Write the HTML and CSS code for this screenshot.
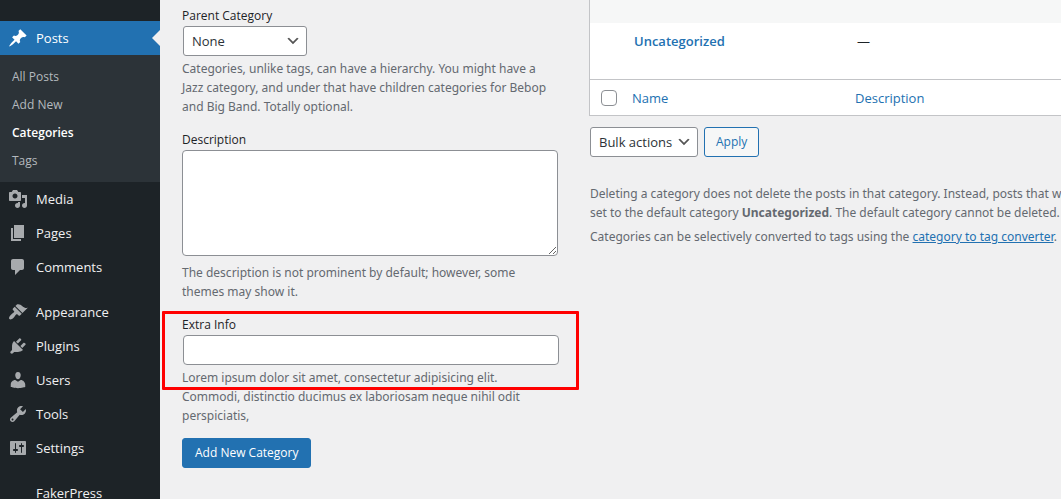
FILE: index.html
```html
<!DOCTYPE html>
<html lang="en">
<head>
<meta charset="utf-8">
<meta name="viewport" content="width=device-width, initial-scale=1">
<title>Categories</title>
<link rel="stylesheet" href="styles.css">
</head>
<body>
<div class="admin">
  <nav class="menu" aria-label="Main menu">
    <a class="menu-item current" href="#"><svg class="icon" viewBox="0 0 20 20" aria-hidden="true"><path d="M10.44 3.02l1.82-1.82 6.36 6.35-1.83 1.82c-1.05-.68-2.48-.57-3.41.36l-.75.75c-.92.93-1.04 2.35-.35 3.41l-1.83 1.82-2.41-2.41-2.8 2.79c-.42.42-3.38 2.71-3.8 2.29s1.86-3.39 2.28-3.81l2.79-2.79L4.1 9.36l1.83-1.82c1.05.69 2.48.57 3.4-.36l.75-.75c.93-.92 1.05-2.35.36-3.41z"/></svg><span>Posts</span></a>
    <div class="submenu">
      <a href="#">All Posts</a>
      <a href="#">Add New</a>
      <a class="active" href="#">Categories</a>
      <a href="#">Tags</a>
    </div>
    <a class="menu-item" href="#"><svg class="icon" viewBox="0 0 20 20" aria-hidden="true"><path d="M13 11V4c0-.55-.45-1-1-1h-1.67L9 1H5L3.67 3H2c-.55 0-1 .45-1 1v7c0 .55.45 1 1 1h10c.55 0 1-.45 1-1zM7 4.5c1.38 0 2.5 1.12 2.5 2.5S8.38 9.5 7 9.5 4.5 8.38 4.5 7 5.62 4.5 7 4.5zM14 6h5v10.5c0 1.38-1.12 2.5-2.5 2.5S14 17.88 14 16.5s1.12-2.5 2.5-2.5c.17 0 .34.02.5.05V9h-3V6zm-4 8.05V13h2v3.5c0 1.38-1.12 2.5-2.5 2.5S7 17.88 7 16.5 8.12 14 9.5 14c.17 0 .34.02.5.05z"/></svg><span>Media</span></a>
    <a class="menu-item" href="#"><svg class="icon" viewBox="0 0 20 20" aria-hidden="true"><path d="M6 15V2h10v13H6zm-1 1h8v2H3V5h2v11z"/></svg><span>Pages</span></a>
    <a class="menu-item" href="#"><svg class="icon" viewBox="0 0 20 20" aria-hidden="true"><path d="M5 2h9c1.1 0 2 .9 2 2v7c0 1.1-.9 2-2 2h-2l-5 5v-5H5c-1.1 0-2-.9-2-2V4c0-1.1.9-2 2-2z"/></svg><span>Comments</span></a>
    <a class="menu-item group-start" href="#"><svg class="icon" viewBox="0 0 20 20" aria-hidden="true"><path d="M14.48 11.06L7.41 3.99l1.5-1.5c.5-.56 2.3-.47 3.51.32 1.21.8 1.43 1.28 2.91 2.1 1.18.64 2.45 1.26 4.45.85zm-.71.71L6.7 4.7 4.93 6.47c-.39.39-.39 1.02 0 1.41l1.06 1.06c.39.39.39 1.03 0 1.42-.6.6-1.43 1.11-2.21 1.69-.35.26-.7.53-1.01.84C1.43 14.23.4 16.08 1.4 17.07c.99 1 2.84-.03 4.18-1.36.31-.31.58-.66.85-1.02.57-.78 1.08-1.61 1.69-2.21.39-.39 1.02-.39 1.41 0l1.06 1.06c.39.39 1.02.39 1.41 0z"/></svg><span>Appearance</span></a>
    <a class="menu-item" href="#"><svg class="icon" viewBox="0 0 20 20" aria-hidden="true"><path d="M13.11 4.36L9.87 7.6 8 5.73l3.24-3.24c.35-.34 1.05-.2 1.56.32.52.51.66 1.21.31 1.55zm-8 1.77l.91-1.12 9.01 9.01-1.19.84c-.71.71-2.63 1.16-3.82 1.16H6.14L4.9 17.26c-.59.59-1.54.59-2.12 0-.59-.58-.59-1.53 0-2.12l1.24-1.24v-3.88c0-1.13.4-3.19 1.09-3.89zm7.26 3.97l3.24-3.24c.34-.35 1.04-.21 1.55.31.52.51.66 1.21.31 1.55l-3.24 3.25z"/></svg><span>Plugins</span></a>
    <a class="menu-item" href="#"><svg class="icon" viewBox="0 0 20 20" aria-hidden="true"><path d="M10 9.25c-2.27 0-2.73-3.44-2.73-3.44C7 4.02 7.82 2 9.97 2c2.16 0 2.98 2.02 2.71 3.81 0 0-.41 3.44-2.68 3.44zm0 2.57L12.72 10c2.39 0 4.52 2.33 4.52 4.53v2.49s-3.65 1.13-7.24 1.13c-3.65 0-7.24-1.13-7.24-1.13v-2.49c0-2.25 1.94-4.48 4.47-4.48z"/></svg><span>Users</span></a>
    <a class="menu-item" href="#"><svg class="icon" viewBox="0 0 20 20" aria-hidden="true"><path d="M16.68 9.77c-1.34 1.34-3.3 1.67-4.95.99l-5.41 6.52c-.99.99-2.59.99-3.58 0s-.99-2.59 0-3.57l6.52-5.42c-.68-1.65-.35-3.61.99-4.95 1.28-1.28 3.12-1.62 4.72-1.06l-2.89 2.89 2.82 2.82 2.86-2.87c.53 1.58.18 3.39-1.08 4.65zM3.81 16.21c.4.39 1.04.39 1.43 0 .4-.4.4-1.04 0-1.43-.39-.4-1.03-.4-1.43 0-.39.39-.39 1.03 0 1.43z"/></svg><span>Tools</span></a>
    <a class="menu-item" href="#"><svg class="icon" viewBox="0 0 20 20" aria-hidden="true"><path d="M18 16V4c0-.55-.45-1-1-1H3c-.55 0-1 .45-1 1v12c0 .55.45 1 1 1h14c.55 0 1-.45 1-1zM8 11h1c.55 0 1 .45 1 1s-.45 1-1 1H8v1.5c0 .28-.22.5-.5.5s-.5-.22-.5-.5V13H6c-.55 0-1-.45-1-1s.45-1 1-1h1V5.5c0-.28.22-.5.5-.5s.5.22.5.5V11zm5-2h-1c-.55 0-1-.45-1-1s.45-1 1-1h1V5.5c0-.28.22-.5.5-.5s.5.22.5.5V7h1c.55 0 1 .45 1 1s-.45 1-1 1h-1v5.5c0 .28-.22.5-.5.5s-.5-.22-.5-.5V9z"/></svg><span>Settings</span></a>
    <a class="menu-item group-start" href="#"><span class="icon"></span><span>FakerPress</span></a>
  </nav>

  <main class="content">
    <form class="add-form">
      <div class="field">
        <label for="parent">Parent Category</label>
        <select id="parent" class="select parent"><option>None</option></select>
        <p>Categories, unlike tags, can have a hierarchy. You might have a Jazz category, and under that have children categories for Bebop and Big Band. Totally optional.</p>
      </div>
      <div class="field">
        <label for="description">Description</label>
        <textarea id="description" class="box" rows="5"></textarea>
        <p class="spaced">The description is not prominent by default; however, some themes may show it.</p>
      </div>
      <div class="field highlighted">
        <label for="extra">Extra Info</label>
        <input id="extra" class="box" type="text">
        <p>Lorem ipsum dolor sit amet, consectetur adipisicing elit. Commodi, distinctio ducimus ex laboriosam neque nihil odit perspiciatis,</p>
      </div>
      <button class="button primary" type="button">Add New Category</button>
    </form>

    <section class="list">
      <table class="terms">
        <tbody>
          <tr class="alternate"><td class="check"></td><td class="name"></td><td></td></tr>
          <tr class="term"><td class="check"></td><td class="name"><a href="#">Uncategorized</a></td><td>—</td></tr>
        </tbody>
        <tfoot>
          <tr><td class="check"><input type="checkbox" aria-label="Select all"></td><th class="name" scope="col"><a href="#">Name</a></th><th scope="col"><a href="#">Description</a></th></tr>
        </tfoot>
      </table>
      <div class="actions">
        <select class="select" aria-label="Bulk actions"><option>Bulk actions</option></select>
        <button class="button" type="button">Apply</button>
      </div>
      <div class="notes">
        <p>Deleting a category does not delete the posts in that category. Instead, posts that were<br>set to the default category <strong>Uncategorized</strong>. The default category cannot be deleted.</p>
        <p>Categories can be selectively converted to tags using the <a href="#">category to tag converter</a>.</p>
      </div>
    </section>
  </main>
</div>
</body>
</html>
```
FILE: styles.css
```css
*,
*::before,
*::after {
  box-sizing: border-box;
}

body {
  margin: 0;
  background: #f0f0f1;
  color: #1d2327;
  font: 12px/19px "Open Sans", "Noto Sans", sans-serif;
}

p {
  margin: 0;
  font-family: "Noto Sans", "Open Sans", sans-serif;
}

a {
  color: #2271b1;
}

.admin {
  display: flex;
  height: 100vh;
  overflow: hidden;
}

/* Sidebar */
.menu {
  flex: 0 0 160px;
  padding-top: 21px;
  background: #1d2327;
}

.menu a {
  text-decoration: none;
}

.menu-item {
  display: flex;
  align-items: center;
  gap: 8px;
  height: 34px;
  padding: 0 8px;
  color: #f0f0f1;
  font-size: 13px;
}

.menu-item.group-start {
  margin-top: 11px;
}

.icon {
  width: 20px;
  height: 20px;
  fill: #a7aaad;
}

.menu-item.current {
  position: relative;
  background: #2271b1;
  color: #fff;
}

.current .icon {
  fill: #fff;
}

.menu-item.current::after {
  content: "";
  position: absolute;
  top: 9px;
  right: 0;
  border: 8px solid transparent;
  border-left: 0;
  border-right-color: #f0f0f1;
}

.submenu {
  padding: 8px 0 7px;
  background: #2c3338;
}

.submenu a {
  display: block;
  padding: 0 12px;
  color: #b4b9be;
  line-height: 28px;
}

.submenu .active {
  color: #fff;
  font-weight: 600;
}

/* Content columns */
.content {
  display: flex;
  flex: 1;
  gap: 31px;
  min-width: 0;
  padding-left: 22px;
}

.add-form {
  flex: 0 0 376px;
  padding-top: 5px;
  color: #646970;
}

.field {
  margin-bottom: 13px;
}

.field label {
  display: block;
  color: #1d2327;
  line-height: 21px;
}

.field p {
  margin-top: 3px;
  padding-right: 8px;
}

.field p.spaced {
  margin-top: 7px;
}

.box {
  display: block;
  width: 100%;
  border: 1px solid #8c8f94;
  border-radius: 4px;
  background: #fff;
  font: inherit;
}

input.box {
  height: 30px;
  margin: 0 1px;
  padding: 0 8px;
}

textarea.box {
  height: 106px;
  padding: 2px 6px;
}

.highlighted {
  position: relative;
}

.highlighted::after {
  content: "";
  position: absolute;
  top: -3px;
  left: -20px;
  right: -21px;
  height: 79px;
  border: 3px solid #f00;
  border-radius: 1px;
  pointer-events: none;
}

.select {
  height: 30px;
  padding: 0 24px 0 8px;
  border: 1px solid #8c8f94;
  border-radius: 3px;
  appearance: none;
  background: #fff url("data:image/svg+xml,%3Csvg xmlns='http://www.w3.org/2000/svg' viewBox='0 0 20 20'%3E%3Cpath d='M5 6l5 5 5-5 2 1-7 7-7-7 2-1z' fill='%23555'/%3E%3C/svg%3E") no-repeat right 5px center / 16px 16px;
  color: #2c3338;
  font: 13px/28px "Open Sans", "Noto Sans", sans-serif;
}

.select.parent {
  display: block;
  width: 124px;
  margin: 0 1px;
}

.button {
  height: 30px;
  padding: 0 11px;
  border: 1px solid #2271b1;
  border-radius: 3px;
  background: #f6f7f7;
  color: #2271b1;
  font: 12px/28px "Open Sans", "Noto Sans", sans-serif;
}

.button.primary {
  padding: 0 12px;
  background: #2271b1;
  color: #fff;
}

/* Term list */
.list {
  flex: 1;
  min-width: 0;
  overflow: hidden;
}

.terms {
  width: 100%;
  border: 1px solid #c3c4c7;
  border-width: 0 0 1px 1px;
  border-spacing: 0;
  table-layout: fixed;
  background: #fff;
}

.terms td,
.terms th {
  padding: 9px 10px 7px;
  font-weight: 400;
  text-align: left;
  vertical-align: top;
}

.terms a {
  text-decoration: none;
}

.terms .check {
  width: 32px;
}

.terms .name {
  width: 223px;
}

.terms .alternate td {
  height: 23px;
  padding: 0;
  background: #f6f7f7;
}

.terms .term td {
  height: 56px;
  padding-left: 12px;
  font-size: 13px;
}

.term a {
  font-weight: 600;
}

.terms tfoot td,
.terms tfoot th {
  height: 36px;
  border-top: 1px solid #c3c4c7;
  font-size: 13px;
}

.terms tfoot td {
  padding: 10px 0 0 11px;
}

.terms input {
  display: block;
  width: 16px;
  height: 16px;
  margin: 0;
  border: 1px solid #8c8f94;
  border-radius: 4px;
  appearance: none;
  background: #fff;
}

.actions {
  display: flex;
  gap: 6px;
  padding: 11px 0 0 1px;
}

.notes {
  display: grid;
  gap: 5px;
  padding: 27px 0 0 1px;
  color: #646970;
  white-space: nowrap;
}
```
